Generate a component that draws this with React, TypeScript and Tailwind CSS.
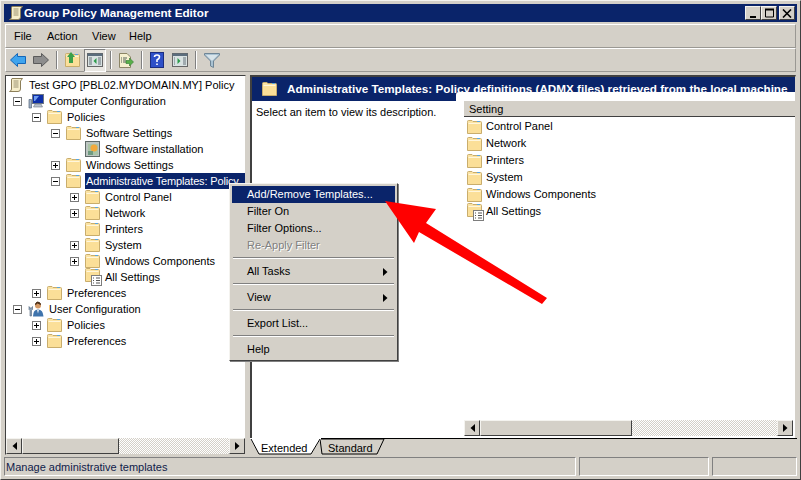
import { ReactNode } from 'react';

const treeIndent = ['pl-[2px]', 'pl-[7px]', 'pl-[26px]', 'pl-[45px]', 'pl-[64px]'];

function Folder({ className = '' }: { className?: string }) {
  return (
    <svg width="15" height="14" viewBox="0 0 15 14" className={`shrink-0 ${className}`}>
      <path d="M.5 2.5 V1.5 Q.5.5 1.5.5 H5 L6 1.5 H13.5 Q14.5 1.5 14.5 2.5 V13.5 H.5 Z" fill="#fbe3a3" stroke="#c9ad6c" />
      <rect x="1.5" y="3" width="12" height="10" fill="#fbdf98" />
      <rect x="1.5" y="3" width="12" height="1" fill="#fff6dc" />
      <rect x="10" y="1" width="3" height="1" fill="#5aa6e0" />
    </svg>
  );
}

function Expander({ open }: { open: boolean }) {
  return (
    <svg width="9" height="9" viewBox="0 0 9 9" className="shrink-0">
      <rect x=".5" y=".5" width="8" height="8" fill="#fff" stroke="#7a7a7a" />
      <path d={open ? 'M2 4.5H7' : 'M2 4.5H7M4.5 2V7'} stroke="#000" />
    </svg>
  );
}

function ScrollIcon({ size = 16 }: { size?: number }) {
  return (
    <svg width={size} height={size} viewBox="0 0 16 16" className="shrink-0">
      <path d="M4 1.5H14.5L12.5 4V12Q12.5 14.5 10 14.5H1.5Q3.5 14 3.5 12V3Q3.5 1.5 4 1.5Z" fill="#f6eecb" stroke="#8d7f59" />
      <path d="M5.5 4H10.5M5.5 6H10.5M5.5 8H10.5M5.5 10H10.5" stroke="#9b9272" />
    </svg>
  );
}

function ComputerIcon() {
  return (
    <svg width="16" height="16" viewBox="0 0 16 16" className="shrink-0">
      <path d="M1 6.5H3.500V15H1Z" fill="#9fb0c4" stroke="#55657c" strokeWidth=".7" />
      <rect x="4.5" y="1.5" width="11" height="9" fill="#0d2fa8" stroke="#6d7784" />
      <path d="M6 3H11L7 8H6Z" fill="#6f9cf0" />
      <path d="M7 11H13L14.5 14H5.5Z" fill="#b9c2cd" stroke="#6d7784" strokeWidth=".6" />
    </svg>
  );
}

function UserIcon() {
  return (
    <svg width="16" height="16" viewBox="0 0 16 16" className="shrink-0">
      <path d="M1 5.500V8.500L2 9.500V15H3.500V9.500L4.500 8.500V5.500L3.500 7H2Z" fill="#8ea3ba" stroke="#51647c" strokeWidth=".6" />
      <circle cx="10" cy="4.5" r="3" fill="#d59a66" />
      <path d="M7.500 3.500Q9.500 .5 12.500 3.500L12 2Q9.500 0 8 2Z" fill="#4a2f18" stroke="#4a2f18" />
      <path d="M5 15.500Q5 8.500 10 8.500T15.500 15.500Z" fill="#3f74ad" />
      <path d="M9 9H11L10 12.500Z" fill="#e6edf5" />
    </svg>
  );
}

function InstallIcon() {
  return (
    <svg width="15" height="16" viewBox="0 0 15 16" className="shrink-0">
      <rect x=".5" y=".5" width="14" height="15" fill="#bcc6c2" stroke="#5f6a68" />
      <rect x="3" y="3" width="10" height="11" fill="#a9c3a6" />
      <circle cx="9" cy="7" r="3.5" fill="#f2a93c" />
      <rect x="3" y="10" width="5" height="4" fill="#6f9a80" />
    </svg>
  );
}

function SettingsFolder() {
  return (
    <span className="relative w-4 h-4 shrink-0 block">
      <Folder className="absolute left-0 -top-px" />
      <svg width="11" height="11" viewBox="0 0 11 11" className="absolute left-[6px] top-[6px]">
        <rect x=".5" y=".5" width="10" height="10" fill="#fff" stroke="#7d7d7d" />
        <path d="M2 3H3M5 3H9M2 5.500H3M5 5.500H9M2 8H3M5 8H9" stroke="#555" />
      </svg>
    </span>
  );
}

function TreeRow({ level, open, icon, selected, children }: { level: number; open?: boolean; icon: ReactNode; selected?: boolean; children: ReactNode }) {
  return (
    <div className={`flex items-center h-4 shrink-0 whitespace-nowrap ${treeIndent[level]}`}>
      {level > 0 && (
        <span className="w-[9px] mr-[6px] shrink-0 flex">
          {open !== undefined && <Expander open={open} />}
        </span>
      )}
      <span className="w-4 mr-[3px] shrink-0 flex items-center">{icon}</span>
      <span className={`h-4 pr-1 leading-4 ${level < 2 ? 'pl-[2px]' : 'pl-px'} ${selected ? 'bg-[#0a246a] text-white grow tracking-[-0.15px]' : ''}`}>{children}</span>
    </div>
  );
}

function ArrowGlyph({ right }: { right?: boolean }) {
  return (
    <svg width="5" height="8" viewBox="0 0 5 8">
      <path d={right ? 'M0 0L4.500 4L0 8Z' : 'M5 0L.5 4L5 8Z'} fill="#000" />
    </svg>
  );
}

function Raised({ className = '', children }: { className?: string; children?: ReactNode }) {
  return (
    <div className={`bg-[#d4d0c8] border border-t-[#f4f3ef] border-l-[#f4f3ef] border-r-[#404040] border-b-[#404040] flex items-center justify-center shrink-0 ${className}`}>
      {children}
    </div>
  );
}

// horizontal scrollbar, thumb width differs between the two panes
function HScroll({ thumb }: { thumb: string }) {
  return (
    <div className="flex h-4 shrink-0 bg-[repeating-conic-gradient(#d4d0c8_0_25%,#ffffff_0_50%)] bg-[length:2px_2px]">
      <Raised className="w-4 h-4"><ArrowGlyph /></Raised>
      <Raised className={`h-4 ${thumb}`} />
      <div className="grow" />
      <Raised className="w-4 h-4"><ArrowGlyph right /></Raised>
    </div>
  );
}

function ToolSep() {
  return <div className="w-[2px] h-[18px] border-l border-l-[#808080] border-r border-r-white shrink-0" />;
}

function WinButton({ children }: { children: ReactNode }) {
  return <Raised className="w-4 h-[14px]">{children}</Raised>;
}

function MenuItem({ label, active, disabled, sub }: { label: string; active?: boolean; disabled?: boolean; sub?: boolean }) {
  return (
    <div className={`flex items-center justify-between h-[17px] pl-[15px] pr-[7px] ${active ? 'bg-[#0a246a] text-white' : ''} ${disabled ? 'text-[#808080] [text-shadow:1px_1px_0_#fff]' : ''}`}>
      <span>{label}</span>
      {sub && <ArrowGlyph right />}
    </div>
  );
}

function MenuSep() {
  return <div className="h-[2px] mt-[3px] mb-[4px] mx-px border-t border-t-[#808080] border-b border-b-white" />;
}

export default function App() {
  return (
    <div className="relative w-[801px] h-[480px] overflow-hidden bg-[#d4d0c8] text-[11px] text-black flex flex-col pl-[3px] pr-[3px] pt-[3px] pb-[3px] font-['Liberation_Sans',sans-serif] border border-t-[#f4f3ef] border-l-[#f4f3ef] border-r-[#404040] border-b-[#404040]">
      {/* title bar */}
      <div className="h-[18px] shrink-0 bg-[#0a246a] flex items-center pl-[4px] pr-[2px] text-white font-bold text-[11.7px]">
        <ScrollIcon />
        <span>Group Policy Management Editor</span>
        <div className="ml-auto flex">
          <WinButton>
            <svg width="9" height="9" viewBox="0 0 9 9"><path d="M1 8H7" stroke="#000" strokeWidth="2" /></svg>
          </WinButton>
          <WinButton>
            <svg width="11" height="10" viewBox="0 0 11 10"><path d="M1.500 1.500H9.500V9H1.500Z" fill="none" stroke="#000" /><path d="M1 1.500H10" stroke="#000" strokeWidth="2" /></svg>
          </WinButton>
          <div className="ml-[2px]">
            <WinButton>
              <svg width="10" height="9" viewBox="0 0 10 9"><path d="M1 .5L9 8.500M9 .5L1 8.500" stroke="#000" strokeWidth="1.600" /></svg>
            </WinButton>
          </div>
        </div>
      </div>

      {/* menu bar */}
      <div className="h-6 mt-[2px] mx-px shrink-0 flex items-center pl-2 border border-[#9a9893] border-t-white border-l-white">
        <span className="w-[33px]">File</span>
        <span className="w-[45px]">Action</span>
        <span className="w-[37px]">View</span>
        <span>Help</span>
      </div>

      {/* toolbar */}
      <div className="h-6 mx-px shrink-0 flex items-center pl-[4px] border border-[#9a9893] border-t-white border-l-white">
        <svg width="16" height="14" viewBox="0 0 16 14" className="shrink-0">
          <path d="M.5 7L7.500 .5V3.500H15.500V10.500H7.500V13.500Z" fill="#3fa4ee" stroke="#1466b8" />
        </svg>
        <svg width="16" height="14" viewBox="0 0 16 14" className="shrink-0 ml-[7px]">
          <path d="M15.500 7L8.500 .5V3.500H.5V10.500H8.500V13.500Z" fill="#8d8d8d" stroke="#5b5b5b" />
        </svg>
        <div className="ml-[7px]"><ToolSep /></div>
        <span className="relative ml-[7px] w-[15px] h-[15px] shrink-0">
          <Folder />
          <svg width="10" height="12" viewBox="0 0 10 12" className="absolute left-[2px] -top-px">
            <path d="M2 11V5H0L4 0L8 5H6V11Z" fill="#3aa04a" />
          </svg>
        </span>
        <div className="ml-[4px] w-[22px] h-[23px] shrink-0 bg-[#e9e7e2] border border-t-[#808080] border-l-[#808080] border-r-white border-b-white flex items-center justify-center">
          <svg width="16" height="14" viewBox="0 0 16 14">
            <rect x=".5" y=".5" width="15" height="13" fill="#d9e2e2" stroke="#666" />
            <rect x=".5" y=".5" width="15" height="2.500" fill="#5b6d7d" />
            <path d="M2 5H5M2 7H5M2 9H5M2 11H5M11 5H14M11 7H14M11 9H14M11 11H14" stroke="#66727a" />
            <path d="M9.500 5V11L6.500 8Z" fill="#2c9b4a" />
          </svg>
        </div>
        <div className="ml-[4px]"><ToolSep /></div>
        <svg width="16" height="15" viewBox="0 0 16 15" className="shrink-0 ml-[6px]">
          <path d="M1.500.5H9L12.500 4V14.500H1.500Z" fill="#f6f0d0" stroke="#8c8566" />
          <path d="M3 5H4M3 7H4M3 9H4M5 5H9M5 7H8M5 9H8" stroke="#55605a" />
          <path d="M8 7.500H11.500V5L15.500 9L11.500 13V10.500H8Z" fill="#59b04a" stroke="#2f7a30" strokeWidth=".6" />
        </svg>
        <div className="ml-[7px]"><ToolSep /></div>
        <svg width="14" height="16" viewBox="0 0 14 16" className="shrink-0 ml-[7px]">
          <rect x=".5" y=".5" width="13" height="15" fill="#2e50c8" stroke="#1b2d80" />
          <path d="M4.500 5Q4.500 3 7 3T9.500 5Q9.500 6.500 7 8V10M7 11.500V13" fill="none" stroke="#fff" strokeWidth="1.600" />
        </svg>
        <svg width="16" height="14" viewBox="0 0 16 14" className="shrink-0 ml-[8px]">
          <rect x=".5" y=".5" width="15" height="13" fill="#d9e2e2" stroke="#666" />
          <rect x=".5" y=".5" width="15" height="2.500" fill="#5b6d7d" />
          <path d="M11 5H14M11 7H14M11 9H14M11 11H14M2 5H3M2 7H3M2 9H3M2 11H3" stroke="#66727a" />
          <path d="M5.500 5V11L8.500 8Z" fill="#2c9b4a" />
        </svg>
        <div className="ml-[7px]"><ToolSep /></div>
        <svg width="16" height="15" viewBox="0 0 16 15" className="shrink-0 ml-[7px]">
          <path d="M.5.5H15.500V2L9.500 8V14.500L6.500 13V8L.5 2Z" fill="#a9c2d2" stroke="#6e8596" />
          <path d="M2 2H14L8.500 7.500H7.500Z" fill="#d8e4ea" />
        </svg>
      </div>

      {/* panes */}
      <div className="flex grow min-h-0 mt-[3px] mx-px gap-[4px]">
        <div className="w-[241px] shrink-0 bg-white border border-[#808080] border-t-[#404040] border-l-[#404040] border-r-[#d4d0c8] border-b-[#d4d0c8] flex flex-col overflow-hidden">
          <div className="grow pt-px flex flex-col overflow-hidden">
            <TreeRow level={0} icon={<ScrollIcon />}>Test GPO [PBL02.MYDOMAIN.MY] Policy</TreeRow>
            <TreeRow level={1} open icon={<ComputerIcon />}>Computer Configuration</TreeRow>
            <TreeRow level={2} open icon={<Folder />}>Policies</TreeRow>
            <TreeRow level={3} open icon={<Folder />}>Software Settings</TreeRow>
            <TreeRow level={4} icon={<InstallIcon />}>Software installation</TreeRow>
            <TreeRow level={3} open={false} icon={<Folder />}>Windows Settings</TreeRow>
            <TreeRow level={3} open icon={<Folder />} selected>Administrative Templates: Policy</TreeRow>
            <TreeRow level={4} open={false} icon={<Folder />}>Control Panel</TreeRow>
            <TreeRow level={4} open={false} icon={<Folder />}>Network</TreeRow>
            <TreeRow level={4} icon={<Folder />}>Printers</TreeRow>
            <TreeRow level={4} open={false} icon={<Folder />}>System</TreeRow>
            <TreeRow level={4} open={false} icon={<Folder />}>Windows Components</TreeRow>
            <TreeRow level={4} icon={<SettingsFolder />}>All Settings</TreeRow>
            <TreeRow level={2} open={false} icon={<Folder />}>Preferences</TreeRow>
            <TreeRow level={1} open icon={<UserIcon />}>User Configuration</TreeRow>
            <TreeRow level={2} open={false} icon={<Folder />}>Policies</TreeRow>
            <TreeRow level={2} open={false} icon={<Folder />}>Preferences</TreeRow>
          </div>
          <HScroll thumb="w-[97px]" />
        </div>

        <div className="grow min-w-0 flex flex-col">
          <div className="grow min-h-0 bg-white border-l-2 border-t-2 border-[#404040] border-r border-r-[#d4d0c8] flex flex-col">
            <div className="h-6 shrink-0 bg-[#0a246a] text-white font-bold text-[11.7px] flex items-center pl-[10px] whitespace-nowrap overflow-hidden">
              <Folder />
              <span className="ml-[10px]">Administrative Templates: Policy definitions (ADMX files) retrieved from the local machine</span>
            </div>
            <div className="flex grow min-h-0">
              <div className="w-[212px] shrink-0 pl-[4px] pt-[3px]">Select an item to view its description.</div>
              <div className="grow min-w-0 flex flex-col -mt-[9px] relative">
                <div className="h-[9px] -ml-[8px] bg-white rounded-tl-[3px] shrink-0" />
                <div className="h-4 shrink-0 bg-[#d4d0c8] border-b border-b-[#404040] pl-[5px] pt-px flex items-center">Setting</div>
                <div className="grow pt-px flex flex-col">
                  {['Control Panel', 'Network', 'Printers', 'System', 'Windows Components'].map((item) => (
                    <div key={item} className="h-[17px] flex items-center pl-[3px] gap-[3px]">
                      <Folder />
                      <span className="pl-px">{item}</span>
                    </div>
                  ))}
                  <div className="h-[17px] flex items-center pl-[3px] gap-[2px]">
                    <SettingsFolder />
                    <span className="pl-px">All Settings</span>
                  </div>
                </div>
                <div className="mr-[2px]"><HScroll thumb="w-[152px]" /></div>
                <div className="h-[2px] shrink-0" />
              </div>
            </div>
          </div>

          {/* tab strip */}
          <div className="relative h-[17px] shrink-0 border-t border-t-black mr-[-1px]">
            <svg width="140" height="17" viewBox="0 0 140 17" className="absolute left-0 -top-px">
              <path d="M70 1H134L127 16H72Z" fill="#d4d0c8" stroke="#000" />
              <path d="M0 0V1L9 16H61L71 1V0Z" fill="#fff" />
              <path d="M1 1L9 16H61L70 1" fill="none" stroke="#000" />
            </svg>
            <span className="absolute left-[11px] top-px">Extended</span>
            <span className="absolute left-[78px] top-px">Standard</span>
          </div>
        </div>
      </div>

      {/* status bar */}
      <div className="h-[19px] mt-[2px] shrink-0 flex gap-[3px]">
        <div className="w-[572px] shrink-0 pl-px pt-px flex items-center border-t border-t-[#808080] border-l border-l-[#808080] border-r border-r-white border-b border-b-white"><span className="text-[#10204a]">Manage administrative templates</span></div>
        <div className="w-[130px] shrink-0 border-t border-t-[#808080] border-l border-l-[#808080] border-r border-r-white border-b border-b-white" />
        <div className="grow border-t border-t-[#808080] border-l border-l-[#808080] border-r border-r-white border-b border-b-white" />
      </div>

      {/* context menu */}
      <div className="absolute left-[228px] top-[182px] w-[169px] bg-[#d4d0c8] p-[2px] border border-t-[#f4f3ef] border-l-[#f4f3ef] border-r-[#404040] border-b-[#404040] shadow-[1px_1px_0_#808080]">
        <MenuItem label="Add/Remove Templates..." active />
        <MenuItem label="Filter On" />
        <MenuItem label="Filter Options..." />
        <MenuItem label="Re-Apply Filter" disabled />
        <MenuSep />
        <MenuItem label="All Tasks" sub />
        <MenuSep />
        <MenuItem label="View" sub />
        <MenuSep />
        <MenuItem label="Export List..." />
        <MenuSep />
        <MenuItem label="Help" />
      </div>

      {/* red annotation arrow */}
      <svg width="801" height="480" viewBox="0 0 801 480" className="absolute -left-px -top-px pointer-events-none">
        <polygon points="385,201 436,209 426,223 547,298 542,304 419,232 414,243" fill="#ff0000" />
      </svg>
    </div>
  );
}
